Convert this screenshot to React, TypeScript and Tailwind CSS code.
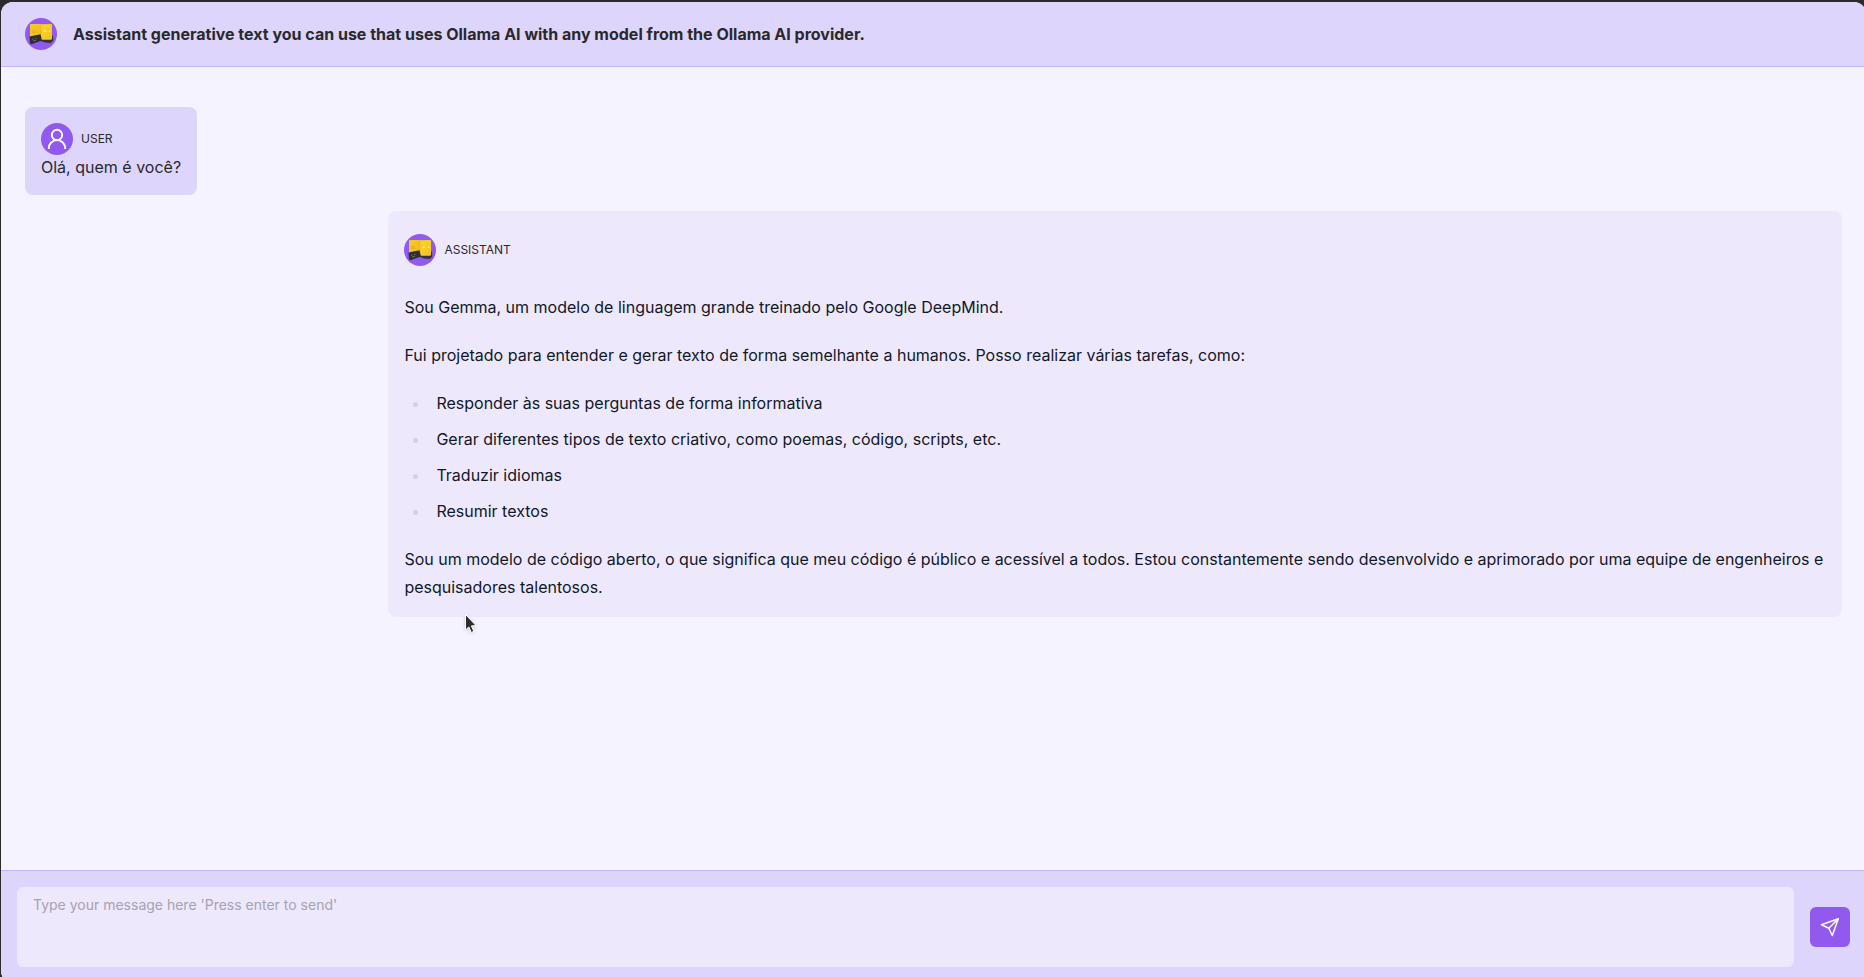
import { useState } from 'react';

function BotAvatar() {
  return (
    <svg viewBox="0 0 32 32" className="size-8 shrink-0" role="img" aria-label="Assistant">
      <defs>
        <linearGradient id="crate" x1="0" y1="0" x2="1" y2="1">
          <stop offset="0" stopColor="#f6ca30" />
          <stop offset="1" stopColor="#eebb1a" />
        </linearGradient>
        <linearGradient id="crateSide" x1="0" y1="0" x2="1" y2="1">
          <stop offset="0" stopColor="#f9d42f" />
          <stop offset="1" stopColor="#f0c51c" />
        </linearGradient>
      </defs>
      <circle cx="16" cy="16" r="16" fill="#9159ee" />
      <path d="M16 20.500l12-3 .300 5-2.300 2.500-6-.500-4-1.500z" fill="#37343b" />
      <path d="M6 6h10.500v15H6q-1 0-1-1V7q0-1 1-1z" fill="url(#crate)" />
      <path d="M16 6.300l10-.3q1 0 1 1v13.500q0 1.200-1.200 1.200H16z" fill="url(#crateSide)" />
      <path d="M16 6.500V17" stroke="#dcae1c" strokeWidth=".5" />
      <path d="M7 12.800h4M7 14.300h4" stroke="#d3a321" strokeWidth=".6" />
      <path d="M19 13.300h1.800M24 13.300h1.200" stroke="#fff3a0" strokeWidth="1.400" />
      <path d="M4.500 18.500l11-2.300 1.500 6.300-10.500 3.700-1.500-.7z" fill="#302e30" />
      <path d="M7 21.300l1.500-.3M10 20.700l1.500-.3M8 23l3-.7" stroke="#85827c" strokeWidth=".7" />
    </svg>
  );
}

function UserAvatar() {
  return (
    <svg viewBox="0 0 32 32" className="size-8 shrink-0" role="img" aria-label="User">
      <circle cx="16" cy="16" r="16" fill="#9159ee" />
      <g fill="none" stroke="#fff" strokeWidth="1.900">
        <circle cx="16" cy="12" r="5.200" />
        <path d="M7.800 26v-.700a8.200 8.200 0 0 1 16.400 0v.700" />
      </g>
    </svg>
  );
}

function SendIcon() {
  return (
    <svg viewBox="0 0 20 20" className="size-5" fill="none" stroke="#fff" strokeWidth="1.500" strokeLinejoin="round" aria-hidden="true">
      <path d="M18.300 1.700L1.500 7.800l7.300 3.400 3.500 7.300z" />
      <path d="M18.300 1.700L8.800 11.200" />
    </svg>
  );
}

function Pointer() {
  return (
    <svg viewBox="0 0 14 20" className="pointer-events-none absolute -bottom-4 left-19 h-5 w-3.5 overflow-visible drop-shadow" aria-hidden="true">
      <path d="M1.500 1.500v15.500l3.300-3 2.500 5.500 2.600-1.200-2.500-5.300 4.600-.5z" fill="#2d2d2d" stroke="#fff" strokeWidth="1" />
    </svg>
  );
}

const tasks = [
  'Responder às suas perguntas de forma informativa',
  'Gerar diferentes tipos de texto criativo, como poemas, código, scripts, etc.',
  'Traduzir idiomas',
  'Resumir textos',
];

export default function App() {
  const [message, setMessage] = useState('');
  return (
    <div className="h-screen overflow-hidden bg-[#2d2a2e] pt-0.5 pl-px font-['Inter',sans-serif] text-[#29292d]">
      <div className="-mr-0.5 flex h-[calc(100vh+4px)] flex-col overflow-hidden rounded-xl bg-[#f5f3ff]">
        <header className="flex items-center gap-4 border-b border-[#c4b5fd] bg-[#ddd5fb] px-6 py-4">
          <BotAvatar />
          <h1 className="text-base font-bold">
            Assistant generative text you can use that uses Ollama AI with any model from the Ollama AI provider.
          </h1>
        </header>

        <main className="flex flex-1 flex-col gap-4 px-6 py-10">
          <article className="self-start rounded-lg bg-[#ddd5fb] p-4">
            <div className="flex items-center gap-2">
              <UserAvatar />
              <span className="text-xs">USER</span>
            </div>
            <p>Olá, quem é você?</p>
          </article>

          <article className="relative w-4/5 self-end rounded-lg bg-[#eee8fd] p-4">
            <div className="flex items-center gap-2 py-[7px]">
              <BotAvatar />
              <span className="text-xs">ASSISTANT</span>
            </div>
            <div className="mt-5 space-y-5 leading-7 text-[#111827]">
              <p>Sou Gemma, um modelo de linguagem grande treinado pelo Google DeepMind.</p>
              <p>Fui projetado para entender e gerar texto de forma semelhante a humanos. Posso realizar várias tarefas, como:</p>
              <ul className="list-disc space-y-2 pl-[26px] marker:text-[#d1d5db]">
                {tasks.map((task) => (
                  <li key={task} className="pl-1.5">{task}</li>
                ))}
              </ul>
              <p>
                Sou um modelo de código aberto, o que significa que meu código é público e acessível a todos. Estou
                constantemente sendo desenvolvido e aprimorado por uma equipe de engenheiros e pesquisadores talentosos.
              </p>
            </div>
            <Pointer />
          </article>
        </main>

        <form
          className="flex items-center gap-4 border-t border-[#c4b5fd] bg-[#ddd5fb] p-4"
          onSubmit={(event) => {
            event.preventDefault();
            setMessage('');
          }}
        >
          <textarea
            aria-label="Message"
            value={message}
            onChange={(event) => setMessage(event.target.value)}
            placeholder="Type your message here 'Press enter to send'"
            className="h-20 flex-1 resize-none rounded-md bg-[#eee8fd] px-4 py-2 text-sm outline-none placeholder:text-[#a6a2b0]"
          />
          <button type="submit" aria-label="Send" className="flex size-10 items-center justify-center rounded-md bg-[#9159ee]">
            <SendIcon />
          </button>
        </form>
      </div>
    </div>
  );
}
